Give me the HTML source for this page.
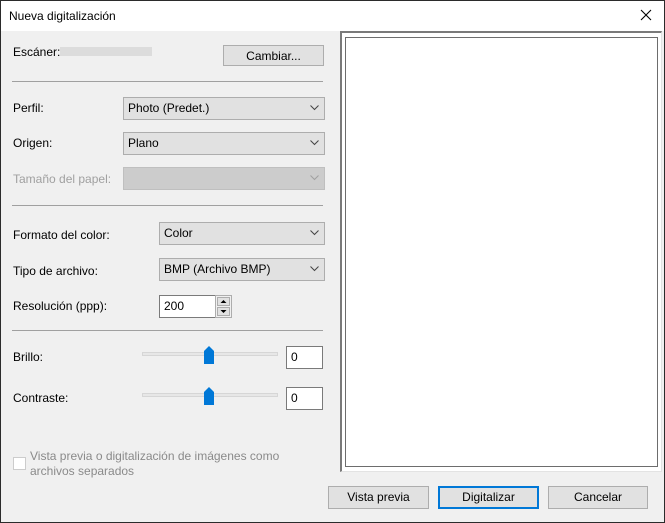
<!DOCTYPE html>
<html><head><meta charset="utf-8"><style>
*{box-sizing:border-box;margin:0;padding:0}
body{width:665px;height:523px;overflow:hidden;font-family:"Liberation Sans",sans-serif;font-size:12px;color:#000;position:relative;background:#f0f0f0}
#bd{position:absolute;left:0;top:0;width:665px;height:523px;border:1px solid #2b2b2b;z-index:10}
#t{position:absolute;left:0;top:0;width:665px;height:31px;background:#fff}
.a{position:absolute}
.lbl{position:absolute;white-space:nowrap;line-height:14px}
.btn{position:absolute;background:#e1e1e1;border:1px solid #adadad;text-align:center;line-height:20px}
.sel{position:absolute;background:#e1e1e1;border:1px solid #adadad;padding-left:4px;line-height:20px}
.sel svg{position:absolute;right:5px;top:7px}
.sep{position:absolute;left:12px;width:311px;height:1px;background:#a0a0a0}
.box{position:absolute;background:#fff;border:1px solid #7a7a7a;padding-left:4px;line-height:20px}
.trk{position:absolute;left:142px;width:136px;height:4px;background:#e7e7e7;border:1px solid #d6d6d6}
</style></head><body>
<div id="bd"></div>
<div id="t"></div>
<div class="lbl" style="left:9px;top:9px">Nueva digitalización</div>
<svg class="a" style="left:640px;top:9px" width="12" height="12"><path d="M1 1L11 11M11 1L1 11" stroke="#000" stroke-width="1.1"/></svg>

<div class="lbl" style="left:13px;top:45px">Escáner:</div>
<div class="a" style="left:60px;top:47px;width:92px;height:9px;background:#dcdcdc"></div>
<div class="btn" style="left:223px;top:45px;width:101px;height:21px">Cambiar...</div>
<div class="sep" style="top:81px"></div>

<div class="lbl" style="left:13px;top:101px">Perfil:</div>
<div class="sel" style="left:123px;top:97px;width:202px;height:23px">Photo (Predet.)<svg width="9" height="6"><path d="M0.5 0.5L4.5 4.5L8.5 0.5" stroke="#444" fill="none"/></svg></div>
<div class="lbl" style="left:13px;top:136px">Origen:</div>
<div class="sel" style="left:123px;top:132px;width:202px;height:23px">Plano<svg width="9" height="6"><path d="M0.5 0.5L4.5 4.5L8.5 0.5" stroke="#444" fill="none"/></svg></div>
<div class="lbl" style="left:13px;top:172px;color:#a0a0a0">Tamaño del papel:</div>
<div class="sel" style="left:123px;top:167px;width:202px;height:23px;background:#cccccc;border-color:#bfbfbf"><svg width="9" height="6"><path d="M0.5 0.5L4.5 4.5L8.5 0.5" stroke="#a0a0a0" fill="none"/></svg></div>
<div class="sep" style="top:205px"></div>

<div class="lbl" style="left:13px;top:228px">Formato del color:</div>
<div class="sel" style="left:159px;top:222px;width:166px;height:23px">Color<svg width="9" height="6"><path d="M0.5 0.5L4.5 4.5L8.5 0.5" stroke="#444" fill="none"/></svg></div>
<div class="lbl" style="left:13px;top:264px">Tipo de archivo:</div>
<div class="sel" style="left:159px;top:258px;width:166px;height:23px">BMP (Archivo BMP)<svg width="9" height="6"><path d="M0.5 0.5L4.5 4.5L8.5 0.5" stroke="#444" fill="none"/></svg></div>
<div class="lbl" style="left:13px;top:299px">Resolución (ppp):</div>
<div class="box" style="left:159px;top:295px;width:57px;height:23px">200</div>
<div class="a" style="left:215px;top:295px;width:17px;height:23px;border:1px solid #adadad;background:#f0f0f0">
 <div class="a" style="left:1px;top:1px;width:13px;height:9px;background:#e1e1e1;border:1px solid #adadad"></div>
 <div class="a" style="left:1px;top:11px;width:13px;height:9px;background:#e1e1e1;border:1px solid #adadad"></div>
 <svg class="a" style="left:4px;top:3px" width="7" height="15"><path d="M0.5 4L3.5 1L6.5 4Z M0.5 11L3.5 14L6.5 11Z" fill="#000"/></svg>
</div>
<div class="sep" style="top:330px"></div>

<div class="lbl" style="left:13px;top:350px">Brillo:</div>
<div class="trk" style="top:352px"></div>
<svg class="a" style="left:204px;top:346px" width="10" height="18"><path d="M0 5L5 0L10 5V18H0Z" fill="#0078d7"/></svg>
<div class="box" style="left:286px;top:346px;width:37px;height:23px">0</div>
<div class="lbl" style="left:13px;top:391px">Contraste:</div>
<div class="trk" style="top:393px"></div>
<svg class="a" style="left:204px;top:387px" width="10" height="18"><path d="M0 5L5 0L10 5V18H0Z" fill="#0078d7"/></svg>
<div class="box" style="left:286px;top:387px;width:37px;height:23px">0</div>

<div class="a" style="left:13px;top:457px;width:13px;height:13px;background:#fff;border:1px solid #cccccc"></div>
<div class="lbl" style="left:30px;top:449px;color:#8a8a8a;line-height:15px">Vista previa o digitalización de imágenes como<br>archivos separados</div>

<div class="a" style="left:340px;top:31px;width:322px;height:441px;background:#fff;border-left:2px solid #7a7a7a;border-top:2px solid #7a7a7a;border-right:1px solid #e3e3e3;border-bottom:1px solid #e3e3e3"></div>
<div class="a" style="left:345px;top:37px;width:313px;height:430px;border:1px solid #6d6d6d;background:#fff"></div>

<div class="btn" style="left:328px;top:486px;width:101px;height:23px">Vista previa</div>
<div class="btn" style="left:438px;top:486px;width:101px;height:23px;border:2px solid #0078d7;line-height:19px">Digitalizar</div>
<div class="btn" style="left:548px;top:486px;width:100px;height:23px">Cancelar</div>
</body></html>
